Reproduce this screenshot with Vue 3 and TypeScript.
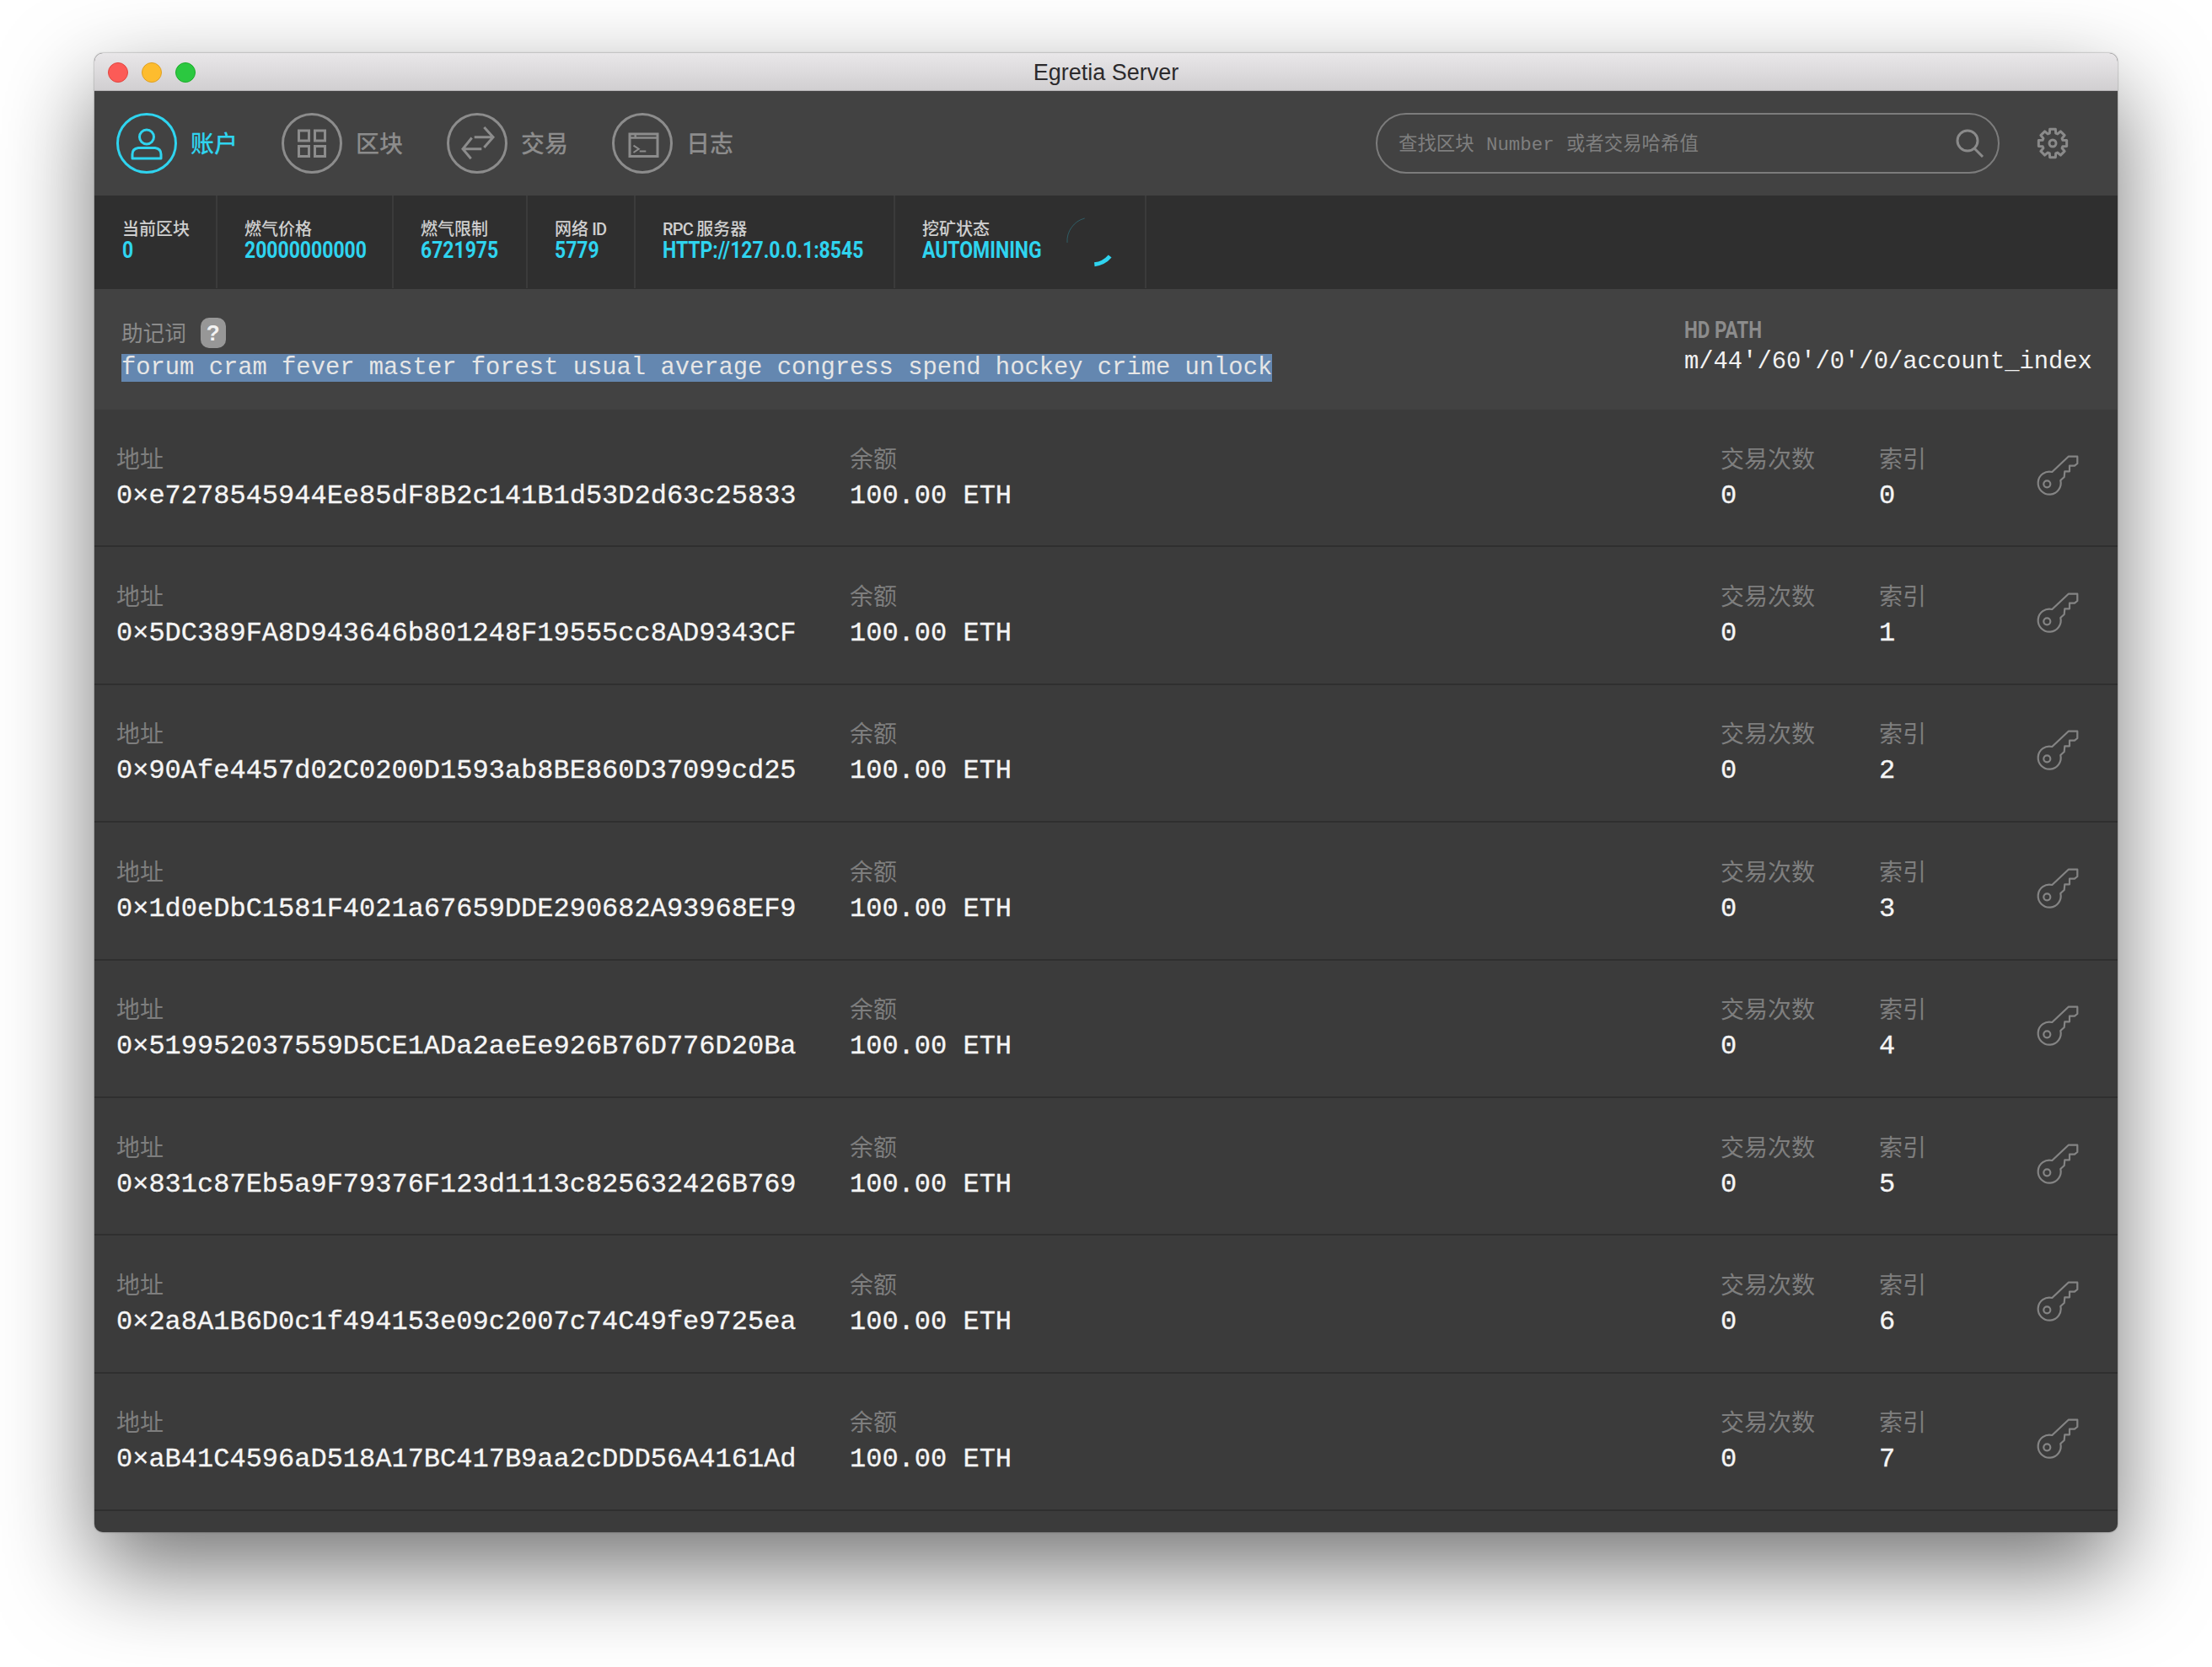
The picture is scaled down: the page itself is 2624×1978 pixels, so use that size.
<script setup lang="ts">
interface Account { address: string; index: number }
interface Stat { label: string; value: string; mining?: boolean }
interface Part { text: string; latin: boolean }

const navItems = [
  { label: '账户', icon: 'person', active: true },
  { label: '区块', icon: 'grid', active: false },
  { label: '交易', icon: 'swap', active: false },
  { label: '日志', icon: 'term', active: false },
]

const stats: Stat[] = [
  { label: '当前区块', value: '0' },
  { label: '燃气价格', value: '20000000000' },
  { label: '燃气限制', value: '6721975' },
  { label: '网络 ID', value: '5779' },
  { label: 'RPC 服务器', value: 'HTTP://127.0.0.1:8545' },
  { label: '挖矿状态', value: 'AUTOMINING', mining: true },
]

function parts(label: string): Part[] {
  return label
    .split(/([A-Za-z ]+)/)
    .filter((t) => t.length > 0)
    .map((text) => ({ text, latin: /^[A-Za-z ]+$/.test(text) }))
}

const addresses = [
  '0×e7278545944Ee85dF8B2c141B1d53D2d63c25833',
  '0×5DC389FA8D943646b801248F19555cc8AD9343CF',
  '0×90Afe4457d02C0200D1593ab8BE860D37099cd25',
  '0×1d0eDbC1581F4021a67659DDE290682A93968EF9',
  '0×519952037559D5CE1ADa2aeEe926B76D776D20Ba',
  '0×831c87Eb5a9F79376F123d1113c825632426B769',
  '0×2a8A1B6D0c1f494153e09c2007c74C49fe9725ea',
  '0×aB41C4596aD518A17BC417B9aa2cDDD56A4161Ad',
]
const accounts: Account[] = addresses.map((address, index) => ({ address, index }))

function gearPath(): string {
  const cx = 20, cy = 20, teeth = 8
  const pts: string[] = []
  for (let i = 0; i < teeth; i++) {
    const a = (i * 2 * Math.PI) / teeth - Math.PI / 2
    const seq: [number, number][] = [
      [12.5, a - 0.3], [17, a - 0.2], [17, a + 0.2], [12.5, a + 0.3],
    ]
    for (const [r, t] of seq) {
      pts.push(`${(cx + r * Math.cos(t)).toFixed(2)} ${(cy + r * Math.sin(t)).toFixed(2)}`)
    }
  }
  return 'M' + pts.join('L') + 'Z'
}
const gear = gearPath()
</script>

<template>
  <div class="page">
    <div class="window">
      <header class="titlebar">
        <div class="lights">
          <span class="light red"></span>
          <span class="light yellow"></span>
          <span class="light green"></span>
        </div>
        <span class="title">Egretia Server</span>
      </header>

      <nav class="toolbar">
        <div class="nav">
          <div v-for="item in navItems" :key="item.label" class="nav-item" :class="{ active: item.active }">
            <svg class="nav-icon" width="72" height="72" viewBox="0 0 72 72" fill="none" stroke="currentColor" stroke-width="3">
              <circle cx="36" cy="36" r="34.5" />
              <g v-if="item.icon === 'person'">
                <circle cx="36" cy="28.5" r="8.5" />
                <path d="M19 54V49Q19 42.5 26 41.5H46Q53 42.5 53 49V54Z" stroke-linejoin="round" />
              </g>
              <g v-else-if="item.icon === 'grid'">
                <rect x="20.5" y="21" width="12" height="12" />
                <rect x="39.5" y="21" width="12" height="12" />
                <rect x="20.5" y="39.5" width="12" height="12" />
                <rect x="39.5" y="39.5" width="12" height="12" />
              </g>
              <g v-else-if="item.icon === 'swap'">
                <path d="M32.7 28.7H55M44.3 17L55 28.7L44.3 41" />
                <path d="M41.3 42.7H19M29.7 29.5L19 42.7L28.7 54.3" />
              </g>
              <g v-else>
                <rect x="21" y="25" width="33" height="26.5" />
                <path d="M21 29.5H54M27.7 25V29.5" stroke-width="2.5" />
                <path d="M25.5 38.7L31.7 42.7L25.5 47M32.7 45.5H40.3" stroke-width="2" />
              </g>
            </svg>
            <span class="nav-label">{{ item.label }}</span>
          </div>
        </div>
        <div class="search">
          <span class="placeholder">查找区块 Number 或者交易哈希值</span>
          <svg class="search-icon" width="34" height="34" viewBox="0 0 34 34" fill="none" stroke="#8a8a8a" stroke-width="3">
            <circle cx="14" cy="14" r="12" />
            <path d="M22 23L32 33" />
          </svg>
        </div>
        <svg class="gear" width="40" height="40" viewBox="0 0 40 40" fill="none" stroke="#8a8a8a" stroke-width="3" stroke-linejoin="round">
          <path :d="gear" />
          <circle cx="20" cy="20" r="4" />
        </svg>
      </nav>

      <section class="stats">
        <div v-for="s in stats" :key="s.label" class="stat">
          <div class="stat-text">
            <div class="stat-label">
              <span v-for="p in parts(s.label)" :key="p.text" :class="{ latin: p.latin }">{{ p.text }}</span>
            </div>
            <div class="stat-value"><span class="narrow">{{ s.value }}</span></div>
          </div>
          <svg v-if="s.mining" class="spinner" width="64" height="64" viewBox="0 0 64 64" fill="none">
            <path d="M4 34A28 28 0 0 1 24.7 5" stroke="#2fd4ef" stroke-opacity="0.28" stroke-width="1" />
            <path d="M36.3 59.7A28 28 0 0 0 54.7 50" stroke="#2fd4ef" stroke-width="5" />
          </svg>
        </div>
      </section>

      <section class="mnemonic">
        <div class="mnemonic-left">
          <div class="mnemonic-label">
            <span>助记词</span>
            <span class="help">?</span>
          </div>
          <div class="mnemonic-text"><span class="selected">forum cram fever master forest usual average congress spend hockey crime unlock</span></div>
        </div>
        <div class="hd">
          <div class="hd-label"><span class="narrow-hd">HD PATH</span></div>
          <div class="hd-value">m/44'/60'/0'/0/account_index</div>
        </div>
      </section>

      <section class="accounts">
        <div v-for="a in accounts" :key="a.index" class="row">
          <div class="cell">
            <div class="cell-label">地址</div>
            <div class="cell-value">{{ a.address }}</div>
          </div>
          <div class="cell">
            <div class="cell-label">余额</div>
            <div class="cell-value">100.00 ETH</div>
          </div>
          <div class="cell">
            <div class="cell-label">交易次数</div>
            <div class="cell-value">0</div>
          </div>
          <div class="cell">
            <div class="cell-label">索引</div>
            <div class="cell-value">{{ a.index }}</div>
          </div>
          <svg class="key" width="52" height="52" viewBox="34 18 52 52" fill="none" stroke="#848484" stroke-width="2.2" stroke-linejoin="round">
            <path d="M53.3 40L72.7 21.7H83.3V30L80 32.7H74V39.3H68.3L67.7 46L63.3 50A13.5 13.5 0 1 1 53.3 40Z" />
            <circle cx="47.3" cy="54.3" r="4" />
          </svg>
        </div>
      </section>
    </div>
  </div>
</template>

<style>
html, body { margin: 0; background: #fff; }
</style>

<style scoped>
.page {
  width: 2624px;
  height: 1978px;
  box-sizing: border-box;
  padding: 63px 112px 0;
  overflow: hidden;
  background: #fff;
}
.window {
  width: 2400px;
  height: 1755px;
  border-radius: 10px;
  overflow: hidden;
  background: #3b3b3b;
  box-shadow: 0 44px 110px rgba(0, 0, 0, 0.55), 0 0 2px rgba(0, 0, 0, 0.5);
  display: flex;
  flex-direction: column;
  font-family: "Liberation Mono", "Noto Sans CJK SC", monospace;
}
.titlebar {
  height: 44px;
  flex: none;
  display: flex;
  align-items: center;
  justify-content: center;
  position: relative;
  background: linear-gradient(#e9e7e9, #d1cfd1);
  border-bottom: 1px solid #b5b3b5;
}
.lights {
  position: absolute;
  left: 16px;
  top: 11px;
  display: flex;
  gap: 16px;
}
.light { width: 24px; height: 24px; border-radius: 50%; box-sizing: border-box; }
.red { background: #fc5b57; border: 1px solid #e24640; }
.yellow { background: #fdbc2e; border: 1px solid #dfa023; }
.green { background: #2bc840; border: 1px solid #1dac2b; }
.title {
  font-family: "Liberation Sans", Arial, sans-serif;
  font-size: 27px;
  color: #2c2a2c;
  padding-top: 3px;
}
.toolbar {
  height: 124px;
  flex: none;
  box-sizing: border-box;
  background: #424242;
  display: flex;
  align-items: center;
  padding-left: 26px;
}
.nav { display: flex; gap: 52px; width: 1494px; }
.nav-item { display: flex; align-items: center; gap: 16px; color: #8c8c8c; }
.nav-item.active { color: #2fd4ef; }
.nav-icon { display: block; }
.nav-label {
  font-family: "Noto Sans CJK SC", sans-serif;
  font-size: 28px;
  font-weight: 500;
  line-height: 40px;
  width: 56px;
  margin-top: -2px;
}
.search {
  width: 740px;
  height: 72px;
  box-sizing: border-box;
  border: 2px solid #7c7c7c;
  border-radius: 36px;
  display: flex;
  align-items: center;
  justify-content: space-between;
  padding: 0 16px 0 25px;
}
.placeholder {
  font-size: 22.4px;
  color: #7f7f7f;
  white-space: pre;
  word-spacing: 1px;
  margin-top: -4px;
}
.search-icon { display: block; }
.gear { margin-left: 43px; display: block; }
.stats {
  height: 111px;
  flex: none;
  background: #2f2f2f;
  display: grid;
  grid-template-columns: 146px 209px 159px 128px 308px 298px;
  justify-content: start;
}
.stat {
  display: flex;
  align-items: flex-start;
  gap: 28px;
  padding: 0 0 0 32px;
  border-right: 2px solid #3b3b3b;
  height: 110px;
  box-sizing: border-box;
}
.stat:first-child { padding-left: 33px; }
.stat-text { padding-top: 28px; width: 140px; flex: none; }
.stat-label {
  font-family: "Liberation Sans", "Noto Sans CJK SC", sans-serif;
  font-size: 20px;
  line-height: 25px;
  font-weight: 500;
  color: #cfcfcf;
  white-space: pre;
}
.latin {
  font-family: "Roboto", sans-serif;
  letter-spacing: -0.8px;
}
.stat-value {
  font-family: "Roboto", sans-serif;
  font-size: 28px;
  line-height: 26px;
  font-weight: 700;
  color: #2fd4ef;
  white-space: pre;
  margin-top: -1px;
}
.narrow {
  display: inline-block;
  transform: scaleX(0.82);
  transform-origin: left center;
}
.narrow-hd {
  display: inline-block;
  transform: scaleX(0.8);
  transform-origin: left center;
}
.spinner { margin-top: 22px; display: block; }
.mnemonic {
  height: 143px;
  flex: none;
  box-sizing: border-box;
  background: #424242;
  display: flex;
  justify-content: space-between;
  padding: 30px 32px 0;
}
.mnemonic-left { width: 1500px; }
.mnemonic-label {
  display: flex;
  align-items: center;
  gap: 17px;
  font-family: "Noto Sans CJK SC", sans-serif;
  font-size: 25.6px;
  line-height: 42px;
  color: #8c8c8c;
  height: 42px;
}
.help {
  width: 30px;
  height: 36px;
  border-radius: 10px;
  background: #979797;
  color: #f2f2f2;
  font-family: "Liberation Sans", sans-serif;
  font-size: 26px;
  font-weight: 700;
  line-height: 36px;
  text-align: center;
  margin-top: 1px;
}
.mnemonic-text {
  font-size: 28.8px;
  line-height: 34px;
  margin-top: 5px;
  color: #e6e6e6;
  white-space: pre;
}
.selected { background: #6487b0; }
.hd { width: 484px; padding-top: 6px; margin-right: -2px; }
.hd-label {
  font-family: "Roboto", sans-serif;
  font-weight: 700;
  font-size: 28px;
  line-height: 26px;
  color: #8c8c8c;
  white-space: pre;
}
.hd-value {
  font-size: 28.8px;
  line-height: 44px;
  margin-top: 3px;
  color: #f2f2f2;
  white-space: pre;
}
.accounts { flex: 1; min-height: 0; }
.row {
  height: 163.4px;
  box-sizing: border-box;
  border-bottom: 2px solid #2f2f2f;
  padding: 0 0 0 26px;
  display: grid;
  grid-template-columns: 870px 1033px 188px 186px 52px;
  align-items: center;
  background: #3b3b3b;
}
.cell-label {
  font-family: "Noto Sans CJK SC", sans-serif;
  font-size: 28px;
  line-height: 40px;
  margin-bottom: 4px;
  color: #7e7e7e;
}
.cell-value {
  font-size: 32px;
  line-height: 44px;
  color: #f5f5f5;
  white-space: pre;
  -webkit-text-stroke: 0.3px #f5f5f5;
}
.key { display: block; margin-bottom: 6px; }
</style>
